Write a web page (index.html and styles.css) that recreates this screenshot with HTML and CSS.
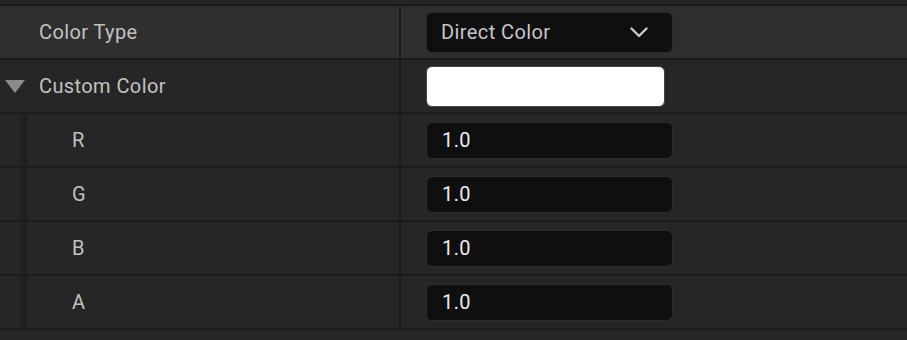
FILE: index.html
```html
<!DOCTYPE html>
<html>
<head>
<meta charset="utf-8">
<link rel="stylesheet" href="styles.css">
</head>
<body>
<div class="panel">
  <div class="strip"></div>
  <div class="row hover">
    <div class="name"><span class="label top">Color Type</span></div>
    <div class="value">
      <div class="combo">
        <span>Direct Color</span>
        <svg class="chev" width="18" height="11" viewBox="0 0 18 11"><path d="M1.5 1.5 L9 9 L16.5 1.5" fill="none" stroke="#c9c9c9" stroke-width="2.4" stroke-linecap="round" stroke-linejoin="round"/></svg>
      </div>
    </div>
  </div>
  <div class="row">
    <div class="name">
      <svg class="tri" width="20" height="13" viewBox="0 0 20 13"><path d="M0 0 H20 L10 13 Z" fill="#8b8b8b"/></svg>
      <span class="label parent">Custom Color</span>
    </div>
    <div class="value"><div class="swatch"></div></div>
  </div>
  <div class="row">
    <div class="name child"><div class="indent"></div><div class="band"></div><span class="label sub">R</span></div>
    <div class="value"><div class="num">1.0</div></div>
  </div>
  <div class="row">
    <div class="name child"><div class="indent"></div><div class="band"></div><span class="label sub">G</span></div>
    <div class="value"><div class="num">1.0</div></div>
  </div>
  <div class="row">
    <div class="name child"><div class="indent"></div><div class="band"></div><span class="label sub">B</span></div>
    <div class="value"><div class="num">1.0</div></div>
  </div>
  <div class="row">
    <div class="name child"><div class="indent"></div><div class="band"></div><span class="label sub">A</span></div>
    <div class="value"><div class="num">1.0</div></div>
  </div>
</div>
</body>
</html>
```
FILE: styles.css
```css
html, body {
  margin: 0;
  padding: 0;
  background: #262626;
  font-family: Roboto, "Noto Sans", sans-serif;
  font-size: 20px;
  letter-spacing: 0.4px;
  overflow: hidden;
}
.panel {
  width: 907px;
}
.strip {
  height: 4px;
  background: #262626;
  border-bottom: 2px solid #1b1b1b;
}
.row {
  display: flex;
  height: 52px;
  background: #262626;
  border-bottom: 2px solid #1b1b1b;
}
.row.hover {
  background: #2f2f2f;
}
.name {
  width: 399px;
  display: flex;
  align-items: center;
}
.label {
  color: #c2c2c2;
}
.label.top {
  padding-left: 39px;
}
.tri {
  margin-left: 5px;
  margin-top: 1px;
}
.label.parent {
  padding-left: 14px;
}
.name.child {
  align-items: stretch;
}
.indent {
  width: 20px;
}
.band {
  width: 7px;
  background: linear-gradient(to right, #222222, #1c1c1c);
}
.label.sub {
  display: flex;
  align-items: center;
  padding-left: 45px;
}
.value {
  flex: 1;
  border-left: 2px solid #1b1b1b;
  padding-left: 25px;
  display: flex;
  align-items: center;
}
.combo {
  box-sizing: border-box;
  width: 247px;
  height: 41px;
  background: #0f0f0f;
  border: 1px solid #2a2a2a;
  border-radius: 6px;
  display: flex;
  align-items: center;
  justify-content: space-between;
  padding: 0 24px 0 14px;
  color: #c6c6c6;
}
.chev {
  margin-top: 1px;
}
.swatch {
  box-sizing: border-box;
  width: 239px;
  height: 41px;
  background: #ffffff;
  border: 1px solid #444444;
  border-radius: 6px;
}
.num {
  box-sizing: border-box;
  width: 247px;
  height: 37px;
  background: #0f0f0f;
  border: 1px solid #2e2e2e;
  border-radius: 6px;
  display: flex;
  align-items: center;
  padding-left: 15px;
  color: #ececec;
}
```
